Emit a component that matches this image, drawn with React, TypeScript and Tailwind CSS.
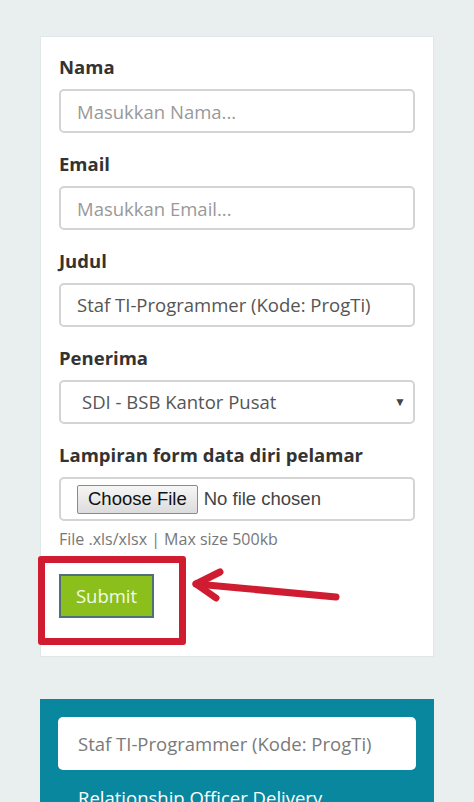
import React from 'react'

const font = { fontFamily: '"Open Sans", "Noto Sans", sans-serif' }

function Field({ label, children }: { label: string; children: React.ReactNode }) {
  return (
    <div className="mb-[18px]">
      <label className="block text-[18.5px] leading-[25px] font-bold text-[#333] mb-[10px]">{label}</label>
      {children}
    </div>
  )
}

export default function App() {
  return (
    <div className="min-h-[802px] bg-[#e9eeee] pt-[36px] overflow-hidden" style={font}>
      <div className="mx-[40px] bg-white border border-[#e1e6e6] px-[18px] pt-[17px] pb-[38px]">
        <Field label="Nama">
          <input
            className="w-full h-[44px] border-2 border-[#d4d4d4] rounded-[5px] px-[16px] text-[18.5px] text-[#555] placeholder:text-[#999] outline-none"
            placeholder="Masukkan Nama..."
          />
        </Field>
        <Field label="Email">
          <input
            className="w-full h-[44px] border-2 border-[#d4d4d4] rounded-[5px] px-[16px] text-[18.5px] text-[#555] placeholder:text-[#999] outline-none"
            placeholder="Masukkan Email..."
          />
        </Field>
        <Field label="Judul">
          <div className="w-full h-[44px] border-2 border-[#d4d4d4] rounded-[5px] px-[16px] flex items-center text-[18.5px] text-[#555]">
            Staf TI-Programmer (Kode: ProgTi)
          </div>
        </Field>
        <Field label="Penerima">
          <div className="w-full h-[44px] border-2 border-[#d4d4d4] rounded-[5px] pl-[21px] pr-[7px] flex items-center text-[18.5px] text-[#555]">
            <span className="flex-1">SDI - BSB Kantor Pusat</span>
            <span className="text-[12px] text-[#444]">▼</span>
          </div>
        </Field>
        <div>
          <label className="block text-[18.5px] leading-[25px] font-bold text-[#333] mb-[10px]">
            Lampiran form data diri pelamar
          </label>
          <div
            className="w-full h-[44px] border-2 border-[#d4d4d4] rounded-[5px] pl-[16px] flex items-center text-[18.5px] text-[#555]"
            style={{ fontFamily: '"Liberation Sans", Arial, sans-serif' }}
          >
            <span className="h-[29px] px-[10px] flex items-center border border-[#8a8a8a] rounded-[2px] bg-gradient-to-b from-[#f6f6f6] to-[#dcdcdc] text-[#111]">
              Choose File
            </span>
            <span className="ml-[6px] text-[#444]">No file chosen</span>
          </div>
          <p className="mt-[7px] text-[16px] leading-[22px] text-[#777]">File .xls/xlsx | Max size 500kb</p>
        </div>
        <div className="relative mt-[24px]">
          <button className="h-[44px] w-[95px] bg-[#8bbf1c] border-2 border-[#4f6f7a] text-[#f3fae4] text-[18.5px]">
            Submit
          </button>
          <div className="absolute left-[-21px] top-[-18px] w-[148px] h-[89px] border-[7px] border-[#cf1c30] rounded-[3px]" />
          <svg className="absolute left-[131px] top-[-6px]" width="160" height="40" viewBox="0 0 160 40">
            <g stroke="#cf1c30" strokeWidth="7" strokeLinecap="round" strokeLinejoin="round" fill="none">
              <path d="M6 16 L146 29" />
              <path d="M30 4 L6 16 L26 30" />
            </g>
          </svg>
        </div>
      </div>
      <div className="mt-[42px] mx-[40px] bg-[#08879f] px-[18px] pt-[18px] pb-[20px]">
        <div className="h-[53px] bg-white rounded-[5px] pl-[20px] flex items-center text-[18.5px] text-[#7a7a7a]">
          Staf TI-Programmer (Kode: ProgTi)
        </div>
        <p className="mt-[14px] pl-[20px] text-[18.5px] text-white underline">Relationship Officer Delivery</p>
      </div>
    </div>
  )
}
